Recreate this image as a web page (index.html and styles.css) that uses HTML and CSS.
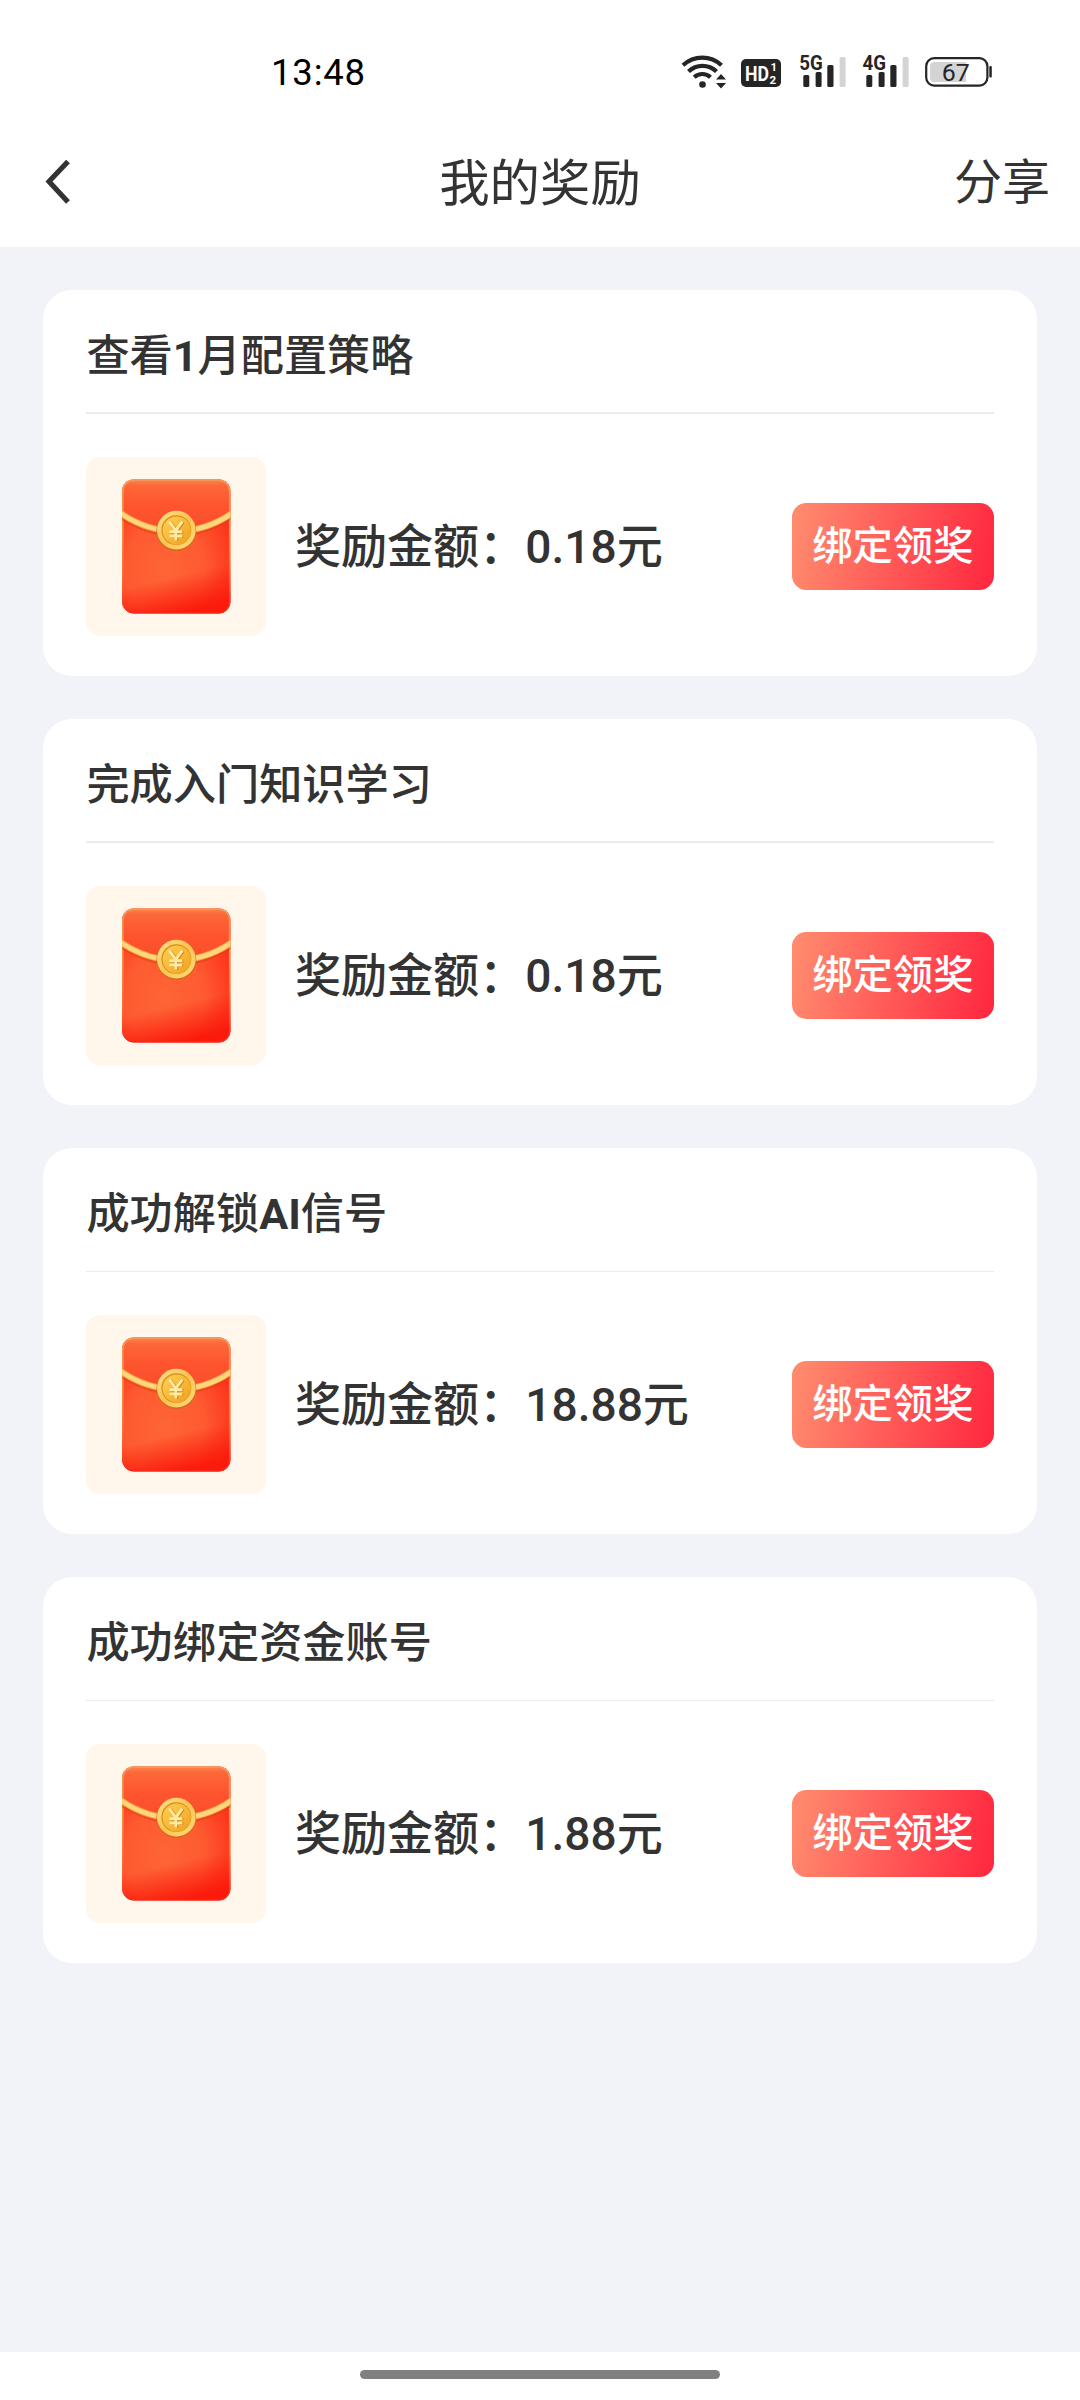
FILE: index.html
```html
<!DOCTYPE html>
<html lang="zh-CN">
<head>
<meta charset="utf-8">
<title>我的奖励</title>
<link rel="stylesheet" href="styles.css">
</head>
<body>
<svg class="defs" width="0" height="0" aria-hidden="true">
  <defs>
    <radialGradient id="body" cx="0.4" cy="0.66" r="0.8">
      <stop offset="0" stop-color="#fe6535"/><stop offset="0.45" stop-color="#fe5a30"/><stop offset="0.8" stop-color="#fd351c"/><stop offset="1" stop-color="#fc2814"/>
    </radialGradient>
    <linearGradient id="shade" x1="0.35" y1="0" x2="0.55" y2="1">
      <stop offset="0.72" stop-color="#fb1a0c" stop-opacity="0"/><stop offset="1" stop-color="#fb1a0c"/>
    </linearGradient>
    <linearGradient id="flap" x1="0" y1="0" x2="0" y2="1">
      <stop offset="0" stop-color="#f98a50"/><stop offset="0.12" stop-color="#fd6838"/><stop offset="0.5" stop-color="#fe552f"/><stop offset="1" stop-color="#f94e2a"/>
    </linearGradient>
    <linearGradient id="edge" x1="0" y1="0" x2="0" y2="1">
      <stop offset="0" stop-color="#f3a163"/><stop offset="0.35" stop-color="#ffa63e"/><stop offset="0.75" stop-color="#ff6a30"/><stop offset="1" stop-color="#f8271c"/>
    </linearGradient>
    <linearGradient id="rim" x1="0" y1="0" x2="1" y2="1">
      <stop offset="0" stop-color="#ffe28a"/><stop offset="0.5" stop-color="#f9c452"/><stop offset="1" stop-color="#ffdc7c"/>
    </linearGradient>
    <linearGradient id="coin" x1="0" y1="0" x2="1" y2="1">
      <stop offset="0" stop-color="#ffd254"/><stop offset="1" stop-color="#efa01c"/>
    </linearGradient>
    <clipPath id="shape"><rect x="35.6" y="22" width="108.6" height="134.7" rx="12"/></clipPath>
    <symbol id="envelope" viewBox="0 0 180 180">
      <g clip-path="url(#shape)">
        <rect x="35" y="22" width="110" height="135" fill="url(#body)"/>
        <rect x="35" y="22" width="110" height="135" fill="url(#shade)"/>
        <path d="M35 22H145V54Q121 74 90 74Q59 74 35 54Z" fill="url(#flap)"/>
        <rect x="35.6" y="22" width="108.6" height="134.7" rx="12" fill="none" stroke="url(#edge)" stroke-width="3" opacity="0.8"/>
        <path d="M34 59Q60 77 90 77Q120 77 146 59" fill="none" stroke="#df3b18" stroke-width="5" opacity="0.5"/>
        <path d="M34 56Q60 74 90 74Q120 74 146 56" fill="none" stroke="#f5a640" stroke-width="6.500"/>
        <path d="M34 56Q60 74 90 74Q120 74 146 56" fill="none" stroke="#ffd67c" stroke-width="4.500"/>
      </g>
      <circle cx="90" cy="74" r="20" fill="#d9691e"/>
      <circle cx="90" cy="73" r="19.4" fill="url(#rim)"/>
      <circle cx="90" cy="73" r="15" fill="#da8a1d"/>
      <circle cx="90.4" cy="73.5" r="14.2" fill="url(#coin)"/>
      <g fill="none" stroke-width="3">
        <path d="M84 65L90.5 74L97 65M90.5 74V84M84 75H97M84 79.5H97" stroke="#d9861a"/>
        <path d="M83 64.5L89.5 73.5L96 64.5M89.5 73.5V83.5M83 74.5H96M83 79H96" stroke="#ffeba6" stroke-width="2.600"/>
      </g>
    </symbol>
  </defs>
</svg>

<div class="screen">
  <header class="header">
    <div class="status">
      <span class="clock">13:48</span>
      <div class="indicators">
        <svg class="wifi" width="44" height="40" viewBox="0 0 44 40">
          <g fill="none" stroke="#252525" stroke-width="4.200">
            <path d="M1 15.3A28 28 0 0 1 39.5 15.3"/><path d="M6.500 21.500A20 20 0 0 1 34.5 21.5"/><path d="M12.200 27.200A12 12 0 0 1 28.500 27.200"/>
          </g>
          <circle cx="20.500" cy="34.500" r="3.300" fill="#252525"/>
          <path d="M34 29.500L39 24L44 29.500ZM34 33L39 38.500L44 33Z" fill="#252525"/>
        </svg>
        <svg class="hd" width="40" height="40" viewBox="0 0 40 40">
          <rect x="0" y="9" width="40" height="28" rx="5" fill="#252525"/>
          <text class="hd-label" x="4" y="30.700" textLength="24" lengthAdjust="spacingAndGlyphs">HD</text>
          <text class="hd-num" x="29.500" y="20.500">1</text>
          <text class="hd-num" x="28.500" y="34">2</text>
        </svg>
        <svg class="signal" width="46" height="40" viewBox="0 0 46 40">
          <g fill="#252525"><rect x="3.300" y="25" width="6" height="12" rx="1.500"/><rect x="15.600" y="22" width="6" height="15" rx="1.500"/><rect x="27.300" y="15" width="6.200" height="22" rx="1.500"/></g>
          <rect x="39.600" y="7" width="6" height="30" rx="1.500" fill="#d4d4d4"/>
          <text class="net" x="-0.800" y="20" textLength="23.500" lengthAdjust="spacingAndGlyphs">5G</text>
        </svg>
        <svg class="signal second" width="46" height="40" viewBox="0 0 46 40">
          <g fill="#252525"><rect x="3.300" y="25" width="6" height="12" rx="1.500"/><rect x="15.600" y="22" width="6" height="15" rx="1.500"/><rect x="27.300" y="15" width="6.200" height="22" rx="1.500"/></g>
          <rect x="39.600" y="7" width="6" height="30" rx="1.500" fill="#d4d4d4"/>
          <text class="net" x="-0.500" y="20" textLength="23.500" lengthAdjust="spacingAndGlyphs">4G</text>
        </svg>
        <svg class="battery" width="67" height="40" viewBox="0 0 67 40">
          <rect x="1.200" y="8.200" width="61.200" height="27.400" rx="8" fill="#fff" stroke="#252525" stroke-width="2.200"/>
          <path d="M9.500 12H41V32H9.500Q5 32 5 27.500V16.500Q5 12 9.500 12Z" fill="#d4d4d4"/>
          <rect x="64.300" y="16" width="2.500" height="11.500" rx="1" fill="#252525"/>
          <text class="charge" x="16.800" y="31" textLength="28" lengthAdjust="spacingAndGlyphs">67</text>
        </svg>
      </div>
    </div>
    <nav class="nav">
      <svg class="back" width="27" height="46" viewBox="0 0 27 46"><path d="M24 2.500L5 22.500L24 43" fill="none" stroke="#333" stroke-width="5.200"/></svg>
      <h1 class="title">我的奖励</h1>
      <span class="share">分享</span>
    </nav>
  </header>

  <main class="list">
    <section class="card">
      <h2 class="card-title">查看<b>1</b>月配置策略</h2>
      <div class="row">
        <svg class="thumb"><use href="#envelope" x="0.600" y="0.300"/></svg>
        <p class="amount">奖励金额：0.18元</p>
        <button class="claim">绑定领奖</button>
      </div>
    </section>
    <section class="card">
      <h2 class="card-title">完成入门知识学习</h2>
      <div class="row">
        <svg class="thumb"><use href="#envelope" x="0.600" y="0.300"/></svg>
        <p class="amount">奖励金额：0.18元</p>
        <button class="claim">绑定领奖</button>
      </div>
    </section>
    <section class="card thin">
      <h2 class="card-title">成功解锁<b>AI</b>信号</h2>
      <div class="row">
        <svg class="thumb"><use href="#envelope" x="0.600" y="0.300"/></svg>
        <p class="amount">奖励金额：18.88元</p>
        <button class="claim">绑定领奖</button>
      </div>
    </section>
    <section class="card thin">
      <h2 class="card-title">成功绑定资金账号</h2>
      <div class="row">
        <svg class="thumb"><use href="#envelope" x="0.600" y="0.300"/></svg>
        <p class="amount">奖励金额：1.88元</p>
        <button class="claim">绑定领奖</button>
      </div>
    </section>
  </main>

  <footer class="home"><div class="home-bar"></div></footer>
</div>
</body>
</html>
```

FILE: styles.css
```css
* { box-sizing: border-box; margin: 0; padding: 0; }

body {
  font-family: Roboto, "Noto Sans CJK SC", sans-serif;
  color: #333;
  background: #f2f3f8;
}

.defs { display: block; }

.screen {
  display: flex;
  flex-direction: column;
  width: 1080px;
  height: 2400px;
}

.header { height: 247px; background: #fff; }

.status {
  display: flex;
  justify-content: space-between;
  height: 116px;
  padding: 50px 88px 0 271px;
}

.clock { font-size: 36.500px; line-height: 46px; letter-spacing: 0.8px; color: #000; }

.indicators { display: flex; height: 40px; }
.indicators svg { overflow: visible; }
.hd { margin-left: 15px; }
.signal { margin-left: 19px; }
.signal.second { margin-left: 17px; }
.battery { margin-left: 16px; }
.hd-label { font-size: 21px; font-weight: 700; fill: #fff; }
.hd-num { font-size: 11.500px; font-weight: 700; fill: #fff; }
.net { font-size: 20px; font-weight: 700; fill: #252525; stroke: #fff; stroke-width: 1.500px; paint-order: stroke; }
.charge { font-size: 24px; fill: #252525; }

.nav {
  display: grid;
  grid-template-columns: 1fr auto 1fr;
  align-items: center;
  height: 131px;
  padding: 0 30px 0 44px;
}

.back { display: block; }
.title { font-size: 50.400px; font-weight: 400; line-height: 74px; padding: 4px 14px 0 0; }
.share { justify-self: end; padding-top: 2px; font-size: 48px; line-height: 70px; }

.list {
  flex: 1;
  display: flex;
  flex-direction: column;
  gap: 43.200px;
  padding: 43.200px;
}

.card {
  height: 385.800px;
  padding: 0 43.200px;
  border-radius: 29px;
  background: #fff;
}

.card-title {
  height: 123.500px;
  border-bottom: 2px solid #ebebeb;
  font-size: 43.200px;
  font-weight: 500;
  line-height: 133px;
}

.card-title b { font-weight: 700; }
.card.thin .card-title { border-bottom-width: 1px; }

.row { display: flex; align-items: center; padding-top: 43.200px; }

.thumb {
  flex: none;
  width: 179.500px;
  height: 179.500px;
  border-radius: 14px;
  background: #fff6ec;
}

.amount {
  flex: 1;
  margin-left: 29px;
  font-size: 46.080px;
  font-weight: 500;
  line-height: 68px;
}

.claim {
  width: 201.600px;
  height: 86.400px;
  border: 0;
  border-radius: 14.400px;
  background: linear-gradient(100deg, #ff8d6f, #ff263f);
  color: #fff;
  font: 500 40.320px/80px Roboto, "Noto Sans CJK SC", sans-serif;
}

.home { display: flex; justify-content: center; height: 48px; padding-top: 18px; background: #fff; }
.home-bar { width: 360px; height: 9px; border-radius: 5px; background: #808080; }
```
